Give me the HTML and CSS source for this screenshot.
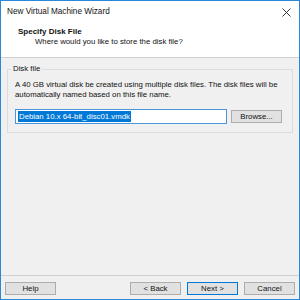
FILE: index.html
```html
<!DOCTYPE html>
<html lang="en">
<head>
    <meta charset="UTF-8">
    <title>New Virtual Machine Wizard</title>
    <link rel="stylesheet" href="styles.css">
</head>
<body>
    <div class="window">
        <div class="titlebar">
            <span class="title">New Virtual Machine Wizard</span>
            <svg class="close" width="9" height="9" viewBox="0 0 9 9">
                <path d="M0.5 0.5 L8.5 8.5 M8.5 0.5 L0.5 8.5" stroke="#333" stroke-width="1"/>
            </svg>
        </div>
        <div class="header">
            <div class="heading">Specify Disk File</div>
            <div class="subheading">Where would you like to store the disk file?</div>
        </div>
        <div class="content">
            <fieldset class="group">
                <legend>Disk file</legend>
                <p>A 40 GB virtual disk be created using multiple disk files. The disk files will be automatically named based on this file name.</p>
                <div class="row">
                    <div class="textbox"><span class="sel">Debian 10.x 64-bit_disc01.vmdk</span></div>
                    <button class="btn browse">Browse...</button>
                </div>
            </fieldset>
        </div>
        <div class="footer">
            <button class="btn">Help</button>
            <div class="spacer"></div>
            <button class="btn">&lt; Back</button>
            <button class="btn default">Next &gt;</button>
            <button class="btn">Cancel</button>
        </div>
    </div>
</body>
</html>
```

FILE: styles.css
```css
body {
    margin: 0;
    padding: 0;
    font-family: 'Liberation Sans', Arial, sans-serif;
    font-size: 7.8px;
    color: #111;
}
.window {
    width: 300px;
    height: 300px;
    box-sizing: border-box;
    border: 1px solid #2b88d8;
    background: #f0f0f0;
    display: flex;
    flex-direction: column;
}
.titlebar {
    height: 21px;
    background: white;
    display: flex;
    align-items: center;
    padding: 0 8px 0 6px;
}
.title {
    flex: 1;
    font-size: 8.2px;
}
.close {
    margin-top: 1px;
}
.header {
    height: 36px;
    background: white;
    box-sizing: border-box;
    padding-top: 5px;
    border-bottom: 1px solid #d0d0d0;
}
.heading {
    font-weight: bold;
    font-size: 8px;
    padding-left: 17px;
    line-height: 10px;
}
.subheading {
    padding-left: 34px;
    line-height: 10px;
}
.content {
    flex: 1;
    padding: 6px 6px 0;
    border-bottom: 1px solid #d0d0d0;
}
.group {
    margin: 0;
    border: 1px solid #dcdcdc;
    padding: 6px 8px 8px 7px;
}
.group legend {
    padding: 0 2px;
    margin-left: -4px;
    line-height: 10px;
}
.group p {
    margin: 0;
    line-height: 9.5px;
}
.row {
    display: flex;
    align-items: center;
    gap: 4px;
    margin-top: 10px;
}
.textbox {
    width: 212px;
    height: 15px;
    box-sizing: border-box;
    border: 1px solid #4a95dc;
    background: white;
    padding: 1px 2px;
    display: flex;
    align-items: center;
}
.sel {
    background: #0078d7;
    color: white;
    line-height: 11px;
    padding: 0 1px;
}
.btn {
    font-family: 'Liberation Sans', Arial, sans-serif;
    font-size: 7.8px;
    color: #111;
    width: 51px;
    height: 13px;
    padding: 0;
    background: #e1e1e1;
    border: 1px solid #adadad;
    box-sizing: border-box;
    line-height: 11px;
}
.btn.default {
    border-color: #0078d7;
}
.footer {
    display: flex;
    align-items: center;
    gap: 6px;
    padding: 6px 4px 4px;
}
.spacer {
    flex: 1;
}
```
